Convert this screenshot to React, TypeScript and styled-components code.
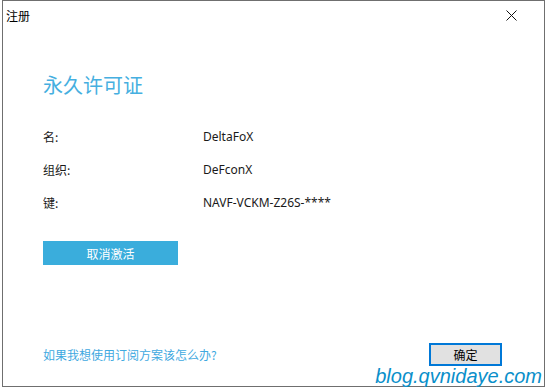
import React from "react";
import styled, { createGlobalStyle } from "styled-components";

const GlobalStyle = createGlobalStyle`
  html, body {
    margin: 0;
    padding: 0;
    background: #ffffff;
  }
  body {
    font-family: "Noto Sans", "Noto Sans CJK SC", sans-serif;
  }
`;

const rows = [
  { label: "名:", value: "DeltaFoX" },
  { label: "组织:", value: "DeFconX" },
  { label: "键:", value: "NAVF-VCKM-Z26S-****" },
];

function App() {
  return (
    <>
      <GlobalStyle />
      <Page>
        <Window>
          <TitleBar>
            <Caption>注册</Caption>
            <CloseButton aria-label="关闭">
              <svg width="11" height="11" viewBox="0 0 11 11">
                <path d="M0.5 0.5 L10.5 10.5 M10.5 0.5 L0.5 10.5" stroke="#111" strokeWidth="1" />
              </svg>
            </CloseButton>
          </TitleBar>
          <Content>
            <Heading>永久许可证</Heading>
            <InfoList>
              {rows.map((r) => (
                <InfoRow key={r.label}>
                  <Label>{r.label}</Label>
                  <Value>{r.value}</Value>
                </InfoRow>
              ))}
            </InfoList>
            <DeactivateButton>取消激活</DeactivateButton>
            <Footer>
              <HelpLink href="#">如果我想使用订阅方案该怎么办?</HelpLink>
              <OkButton>确定</OkButton>
            </Footer>
          </Content>
        </Window>
        <Watermark>blog.qvnidaye.com</Watermark>
      </Page>
    </>
  );
}

const Page = styled.div`
  position: relative;
  width: 546px;
  height: 389px;
  overflow: hidden;
`;

const Window = styled.div`
  margin-left: 2px;
  width: 543px;
  height: 387px;
  box-sizing: border-box;
  border: 1px solid #6f6f6f;
  display: flex;
  flex-direction: column;
  background: #ffffff;
`;

const TitleBar = styled.div`
  height: 28px;
  display: flex;
  align-items: center;
  justify-content: space-between;
  padding: 0 27px 0 3px;
`;

const Caption = styled.span`
  font-family: "Noto Sans CJK SC", sans-serif;
  font-size: 12px;
  color: #000000;
`;

const CloseButton = styled.div`
  width: 11px;
  height: 11px;
  display: flex;
`;

const Content = styled.div`
  flex: 1;
  display: flex;
  flex-direction: column;
  padding: 0 40px;
`;

const Heading = styled.h1`
  margin: 42px 0 0;
  font-family: "Noto Sans CJK SC", sans-serif;
  font-weight: 400;
  font-size: 20px;
  line-height: 28px;
  color: #46afe0;
`;

const InfoList = styled.div`
  margin-top: 27px;
  display: flex;
  flex-direction: column;
  gap: 13px;
`;

const InfoRow = styled.div`
  display: flex;
  height: 20px;
  align-items: center;
  font-size: 12px;
  color: #1a1a1a;
`;

const Label = styled.span`
  width: 160px;
  font-family: "Noto Sans CJK SC", sans-serif;
`;

const Value = styled.span`
  font-family: "Noto Sans", "Noto Sans CJK SC", sans-serif;
`;

const DeactivateButton = styled.div`
  margin-top: 29px;
  width: 135px;
  height: 24px;
  background: #3aaddc;
  color: #ffffff;
  font-family: "Noto Sans CJK SC", sans-serif;
  font-size: 12px;
  display: flex;
  align-items: center;
  justify-content: center;
`;

const Footer = styled.div`
  margin-top: auto;
  margin-bottom: 20px;
  margin-right: 2px;
  display: flex;
  align-items: center;
  justify-content: space-between;
`;

const HelpLink = styled.a`
  font-family: "Noto Sans CJK SC", sans-serif;
  font-size: 12px;
  color: #3fa9df;
  text-decoration: none;
`;

const OkButton = styled.div`
  width: 73px;
  height: 23px;
  box-sizing: border-box;
  border: 2px solid #0078d7;
  background: #e1e1e1;
  font-family: "Noto Sans CJK SC", sans-serif;
  font-size: 12px;
  color: #000000;
  display: flex;
  align-items: center;
  justify-content: center;
`;

const Watermark = styled.div`
  position: absolute;
  right: 4px;
  bottom: 2px;
  font-family: "Liberation Sans", Arial, sans-serif;
  font-style: italic;
  font-size: 20px;
  line-height: 22px;
  color: #0a8fca;
`;

export default App;
